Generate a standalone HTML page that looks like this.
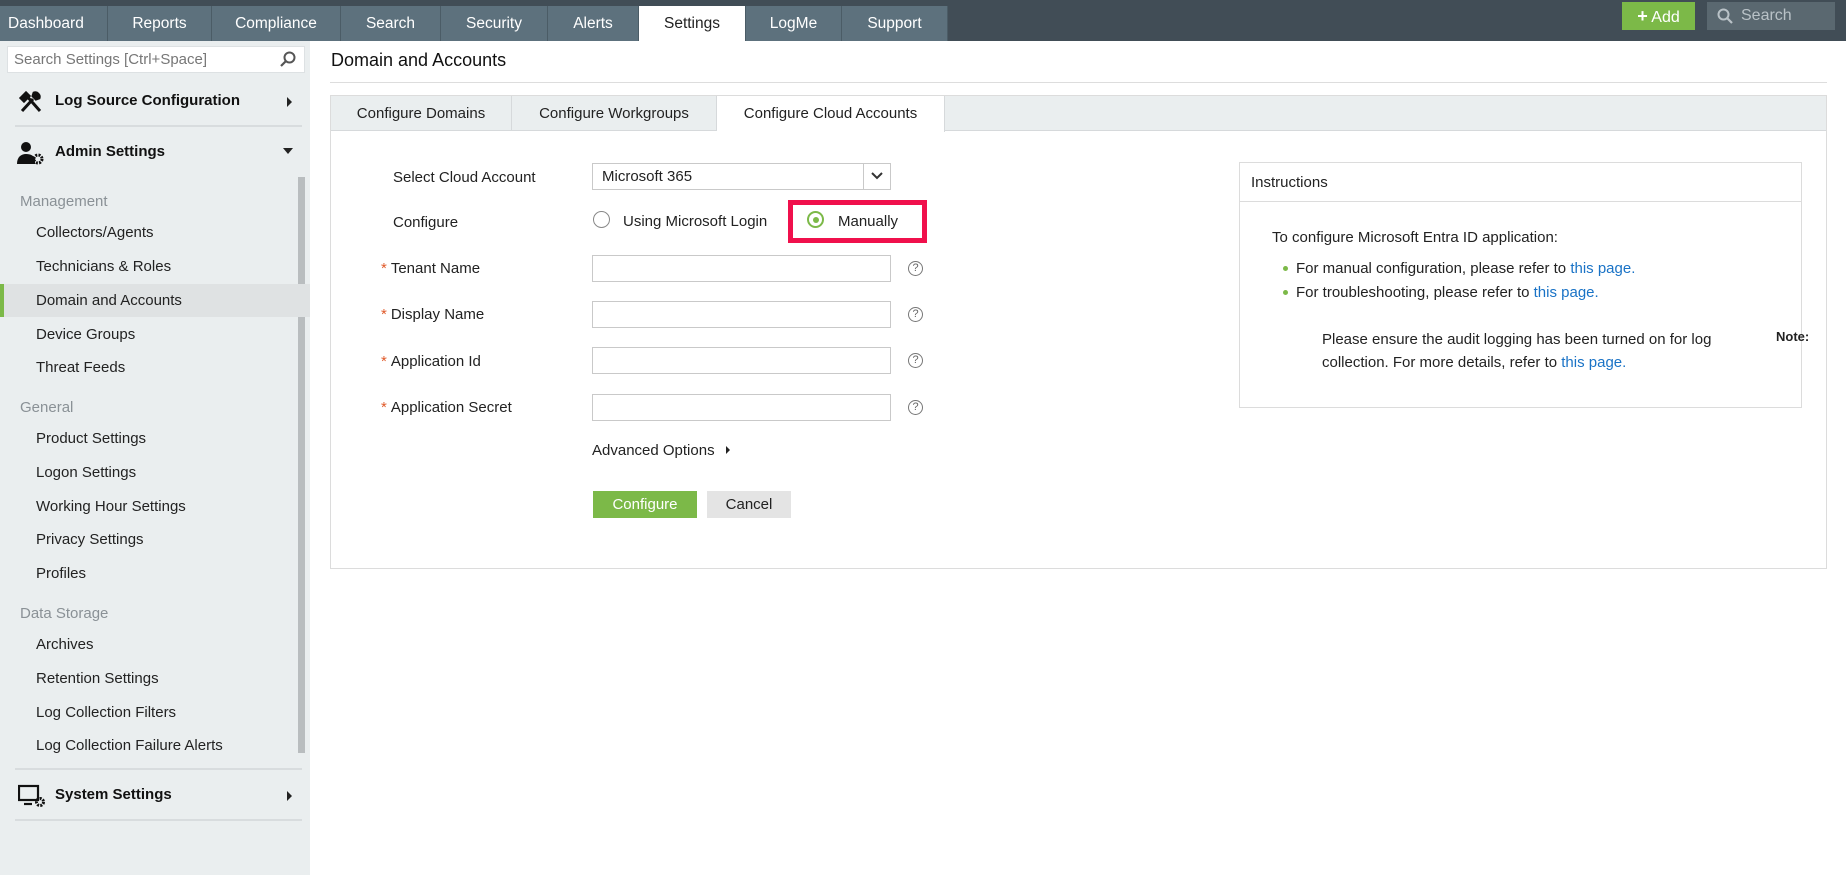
<!DOCTYPE html>
<html><head><meta charset="utf-8"><style>
*{margin:0;padding:0;box-sizing:border-box}
body{width:1846px;height:875px;position:relative;overflow:hidden;font-family:"Liberation Sans",Arial,sans-serif;font-size:15px;color:#222;background:#fff}
.a{position:absolute;white-space:nowrap}
#nav{left:0;top:0;width:1846px;height:41px;background:#414d56}
.tab{position:absolute;top:6px;height:35px;background:#5d717d;color:#fff;font-size:15.5px;text-align:center;line-height:35px;border-right:1px solid #4b5c66}
.tab.on{background:#fff;color:#222}
#side{left:0;top:41px;width:310px;height:834px;background:#eaeeef}
.si{position:absolute;left:36px;font-size:15px;color:#222}
.sh{position:absolute;left:20px;font-size:15px;color:#8a9196}
.sb{position:absolute;left:55px;font-size:15px;font-weight:bold;color:#111}
.div{position:absolute;left:15px;width:287px;height:2px;background:#d8dcde}
.lbl{position:absolute;left:393px;font-size:15px}
.inp{position:absolute;left:592px;width:299px;height:27px;border:1px solid #c9c9c9;background:#fff}
.help{position:absolute;left:908px;width:15px;height:15px;border:1px solid #777;border-radius:50%;font-size:11px;line-height:13px;text-align:center;color:#666}
.star{color:#e05a2a;margin-right:4px}
.lnk{color:#1a73c6}
</style></head><body>
<div id="nav" class="a">
<div class="tab" style="left:0;width:108px;text-align:left;padding-left:8px">Dashboard</div>
<div class="tab" style="left:108px;width:104px">Reports</div>
<div class="tab" style="left:212px;width:129px">Compliance</div>
<div class="tab" style="left:341px;width:100px">Search</div>
<div class="tab" style="left:441px;width:107px">Security</div>
<div class="tab" style="left:548px;width:91px">Alerts</div>
<div class="tab on" style="left:639px;width:107px">Settings</div>
<div class="tab" style="left:746px;width:96px">LogMe</div>
<div class="tab" style="left:842px;width:106px">Support</div>
<div class="a" style="left:1622px;top:2px;width:73px;height:28px;background:#7cb948;color:#fff;font-size:16px;line-height:28px;text-align:center"><b style="font-size:18px">+</b> Add</div>
<div class="a" style="left:1707px;top:2px;width:128px;height:28px;background:#5a6870;color:#b9c2c7;font-size:16px;line-height:28px;padding-left:34px">Search
<svg style="position:absolute;left:10px;top:6px" width="16" height="17" viewBox="0 0 16 17"><circle cx="6.5" cy="6.5" r="5" fill="none" stroke="#b9c2c7" stroke-width="2"/><path d="M10 10l5 5" stroke="#b9c2c7" stroke-width="2.2"/></svg></div>
</div>
<div id="side" class="a"></div>
<div class="a" style="left:7px;top:46px;width:298px;height:27px;background:#fff;border:1px solid #dde1e3;color:#777;font-size:15px;line-height:25px;padding-left:6px">Search Settings [Ctrl+Space]
<svg style="position:absolute;right:8px;top:4px" width="16" height="17" viewBox="0 0 16 17"><circle cx="9.5" cy="6.5" r="5" fill="none" stroke="#555" stroke-width="2"/><path d="M6 10l-5 5" stroke="#555" stroke-width="2.2"/></svg></div>
<svg class="a" style="left:19px;top:90px" width="24" height="24" viewBox="0 0 24 24"><path d="M3 21L14 9M6 4l15 17M2 8l5-5 3 3-5 5zM15 3c3-1 6 2 5 5l-3 1-3-3z" stroke="#111" stroke-width="3" fill="#111"/></svg>
<div class="sb" style="top:92px">Log Source Configuration</div>
<div class="a" style="left:287px;top:97px;border-left:5px solid #222;border-top:5px solid transparent;border-bottom:5px solid transparent"></div>
<div class="div" style="top:125px"></div>
<svg class="a" style="left:17px;top:141px" width="28" height="24" viewBox="0 0 28 24"><circle cx="9" cy="6" r="5" fill="#111"/><path d="M0 23c0-7 4-10 9-10s8 2 9 5v5z" fill="#111"/><circle cx="21" cy="18" r="4" fill="none" stroke="#111" stroke-width="3" stroke-dasharray="2 1.2"/></svg>
<div class="sb" style="top:143px">Admin Settings</div>
<div class="a" style="left:283px;top:148px;border-top:6px solid #222;border-left:5px solid transparent;border-right:5px solid transparent"></div>
<div class="a" style="left:298px;top:177px;width:7px;height:576px;background:#b9bdbf"></div>
<div class="sh" style="top:193px">Management</div>
<div class="si" style="top:224px">Collectors/Agents</div>
<div class="si" style="top:258px">Technicians &amp; Roles</div>
<div class="a" style="left:0;top:284px;width:310px;height:33px;background:#dfe2e3;border-left:4px solid #7cb948"></div>
<div class="si" style="top:292px">Domain and Accounts</div>
<div class="si" style="top:326px">Device Groups</div>
<div class="si" style="top:359px">Threat Feeds</div>
<div class="sh" style="top:399px">General</div>
<div class="si" style="top:430px">Product Settings</div>
<div class="si" style="top:464px">Logon Settings</div>
<div class="si" style="top:498px">Working Hour Settings</div>
<div class="si" style="top:531px">Privacy Settings</div>
<div class="si" style="top:565px">Profiles</div>
<div class="sh" style="top:605px">Data Storage</div>
<div class="si" style="top:636px">Archives</div>
<div class="si" style="top:670px">Retention Settings</div>
<div class="si" style="top:704px">Log Collection Filters</div>
<div class="si" style="top:737px">Log Collection Failure Alerts</div>
<div class="div" style="top:768px"></div>
<svg class="a" style="left:18px;top:784px" width="28" height="24" viewBox="0 0 28 24"><rect x="1" y="2" width="19" height="14" fill="none" stroke="#111" stroke-width="2.2"/><path d="M6 20h8" stroke="#111" stroke-width="2.2"/><circle cx="22" cy="18" r="3.5" fill="none" stroke="#111" stroke-width="3" stroke-dasharray="2 1.2"/></svg>
<div class="sb" style="top:786px">System Settings</div>
<div class="a" style="left:287px;top:791px;border-left:5px solid #222;border-top:5px solid transparent;border-bottom:5px solid transparent"></div>
<div class="div" style="top:819px"></div>

<div class="a" style="left:331px;top:50px;font-size:18px;color:#111">Domain and Accounts</div>
<div class="a" style="left:330px;top:82px;width:1497px;height:1px;background:#ddd"></div>
<div class="a" style="left:330px;top:95px;width:1497px;height:474px;border:1px solid #dcdcdc"></div>
<div class="a" style="left:331px;top:96px;width:1495px;height:35px;background:#eaeeef;border-bottom:1px solid #d6d9db"></div>
<div class="a" style="left:331px;top:96px;width:181px;height:35px;line-height:35px;text-align:center;border-right:1px solid #d6d9db">Configure Domains</div>
<div class="a" style="left:512px;top:96px;width:205px;height:35px;line-height:35px;text-align:center;border-right:1px solid #d6d9db">Configure Workgroups</div>
<div class="a" style="left:717px;top:96px;width:228px;height:36px;line-height:35px;text-align:center;background:#fff;border-right:1px solid #d6d9db">Configure Cloud Accounts</div>

<div class="lbl" style="top:169px">Select Cloud Account</div>
<div class="inp" style="top:163px;padding-left:9px;line-height:26px">Microsoft 365
<div class="a" style="right:0;top:0;width:27px;height:25px;border-left:1px solid #c9c9c9"><svg style="position:absolute;left:7px;top:8px" width="12" height="9" viewBox="0 0 12 9"><path d="M1 1l5 5 5-5" fill="none" stroke="#333" stroke-width="2"/></svg></div></div>
<div class="lbl" style="top:214px">Configure</div>
<div class="a" style="left:593px;top:211px;width:17px;height:17px;border:1px solid #888;border-radius:50%"></div>
<div class="a" style="left:623px;top:213px">Using Microsoft Login</div>
<div class="a" style="left:788px;top:200px;width:139px;height:43px;border:5px solid #f0104c"></div>
<div class="a" style="left:807px;top:211px;width:17px;height:17px;border:2px solid #7cb948;border-radius:50%"><div style="position:absolute;left:3.5px;top:3.5px;width:6px;height:6px;border-radius:50%;background:#7cb948"></div></div>
<div class="a" style="left:838px;top:213px">Manually</div>

<div class="lbl" style="top:260px;left:381px"><span class="star">*</span>Tenant Name</div>
<div class="inp" style="top:255px"></div><div class="help" style="top:261px">?</div>
<div class="lbl" style="top:306px;left:381px"><span class="star">*</span>Display Name</div>
<div class="inp" style="top:301px"></div><div class="help" style="top:307px">?</div>
<div class="lbl" style="top:353px;left:381px"><span class="star">*</span>Application Id</div>
<div class="inp" style="top:347px"></div><div class="help" style="top:353px">?</div>
<div class="lbl" style="top:399px;left:381px"><span class="star">*</span>Application Secret</div>
<div class="inp" style="top:394px"></div><div class="help" style="top:400px">?</div>
<div class="a" style="left:592px;top:442px">Advanced Options</div>
<div class="a" style="left:726px;top:446px;border-left:4px solid #222;border-top:4px solid transparent;border-bottom:4px solid transparent"></div>
<div class="a" style="left:593px;top:491px;width:104px;height:27px;background:#7cb948;color:#fff;text-align:center;line-height:27px">Configure</div>
<div class="a" style="left:707px;top:491px;width:84px;height:27px;background:#e4e4e4;text-align:center;line-height:27px">Cancel</div>

<div class="a" style="left:1239px;top:162px;width:563px;height:246px;border:1px solid #dcdcdc"></div>
<div class="a" style="left:1240px;top:163px;width:561px;height:39px;border-bottom:1px solid #dcdcdc;line-height:39px;padding-left:11px">Instructions</div>
<div class="a" style="left:1272px;top:229px">To configure Microsoft Entra ID application:</div>
<div class="a" style="left:1283px;top:266px;width:5px;height:5px;border-radius:50%;background:#7cb948"></div>
<div class="a" style="left:1296px;top:260px">For manual configuration, please refer to <span class="lnk">this page.</span></div>
<div class="a" style="left:1283px;top:290px;width:5px;height:5px;border-radius:50%;background:#7cb948"></div>
<div class="a" style="left:1296px;top:284px">For troubleshooting, please refer to <span class="lnk">this page.</span></div>
<div class="a" style="left:1322px;top:331px">Please ensure the audit logging has been turned on for log</div>
<div class="a" style="left:1322px;top:354px">collection. For more details, refer to <span class="lnk">this page.</span></div>
<div class="a" style="left:1776px;top:329px;font-size:13px;font-weight:bold">Note:</div>
</body></html>
